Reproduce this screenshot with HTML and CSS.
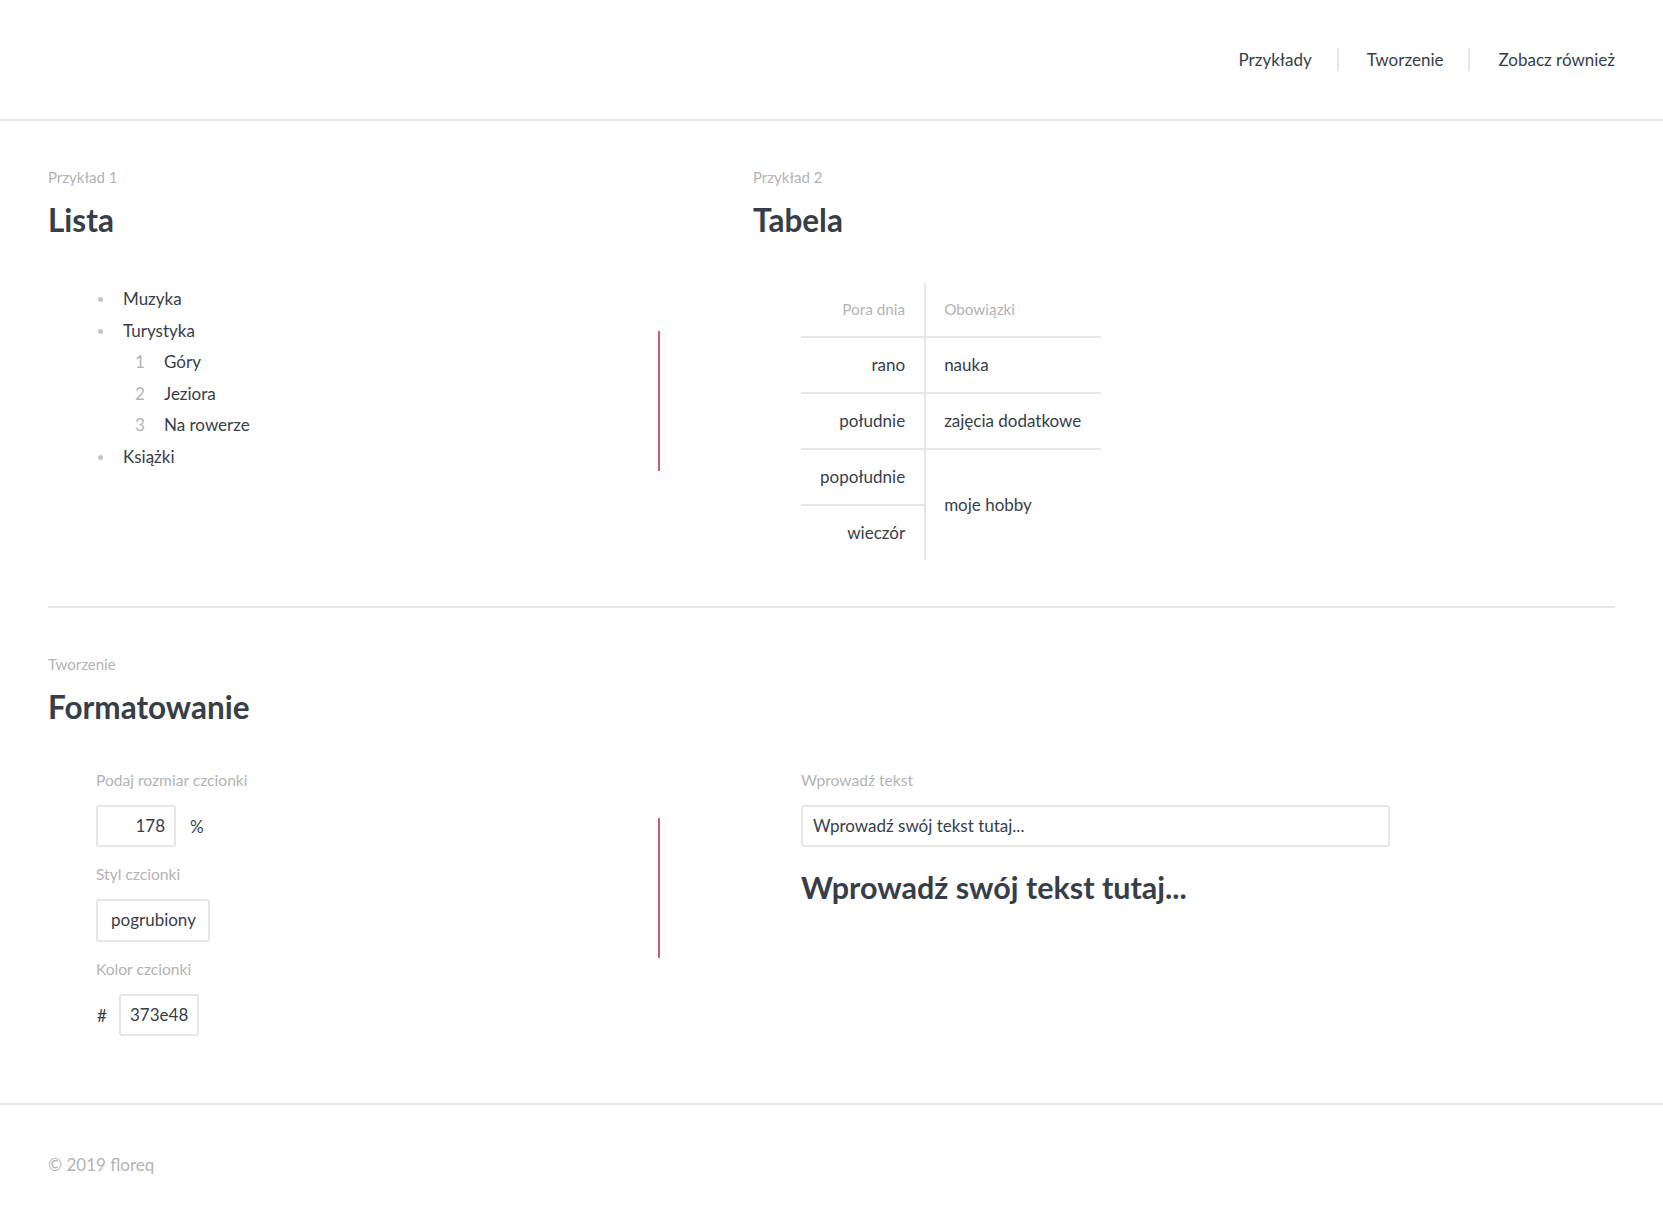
FILE: index.html
```html
<!DOCTYPE html>
<html lang="pl">
<head>
<meta charset="utf-8">
<title>Przykłady</title>
<link rel="stylesheet" href="styles.css">
</head>
<body>
<header class="topbar">
  <nav class="nav">
    <a class="nav-item" href="#przyklady">Przykłady</a>
    <a class="nav-item" href="#tworzenie">Tworzenie</a>
    <a class="nav-item" href="#zobacz">Zobacz również</a>
  </nav>
</header>

<main class="main">
  <section class="section section-first" id="przyklady">
    <div class="grid">
      <div class="col">
        <div class="eyebrow">Przykład 1</div>
        <h2 class="title">Lista</h2>
        <ul class="list">
          <li>Muzyka</li>
          <li>Turystyka
            <ol class="sublist">
              <li>Góry</li>
              <li>Jeziora</li>
              <li>Na rowerze</li>
            </ol>
          </li>
          <li>Książki</li>
        </ul>
      </div>
      <div class="divider"></div>
      <div class="col col-right">
        <div class="eyebrow">Przykład 2</div>
        <h2 class="title">Tabela</h2>
        <table class="table">
          <thead>
            <tr>
              <th class="c1">Pora dnia</th>
              <th class="c2">Obowiązki</th>
            </tr>
          </thead>
          <tbody>
            <tr>
              <td class="c1">rano</td>
              <td class="c2">nauka</td>
            </tr>
            <tr>
              <td class="c1">południe</td>
              <td class="c2">zajęcia dodatkowe</td>
            </tr>
            <tr>
              <td class="c1">popołudnie</td>
              <td class="c2 span" rowspan="2">moje hobby</td>
            </tr>
            <tr class="last">
              <td class="c1">wieczór</td>
            </tr>
          </tbody>
        </table>
      </div>
    </div>
  </section>

  <section class="section section-second" id="tworzenie">
    <div class="grid">
      <div class="col">
        <div class="eyebrow">Tworzenie</div>
        <h2 class="title">Formatowanie</h2>
        <div class="form">
          <div class="field-label">Podaj rozmiar czcionki</div>
          <div class="field-row">
            <span class="box box-size">178</span>
            <span class="unit">%</span>
          </div>
          <div class="field-label">Styl czcionki</div>
          <div class="field-row">
            <span class="box box-style">pogrubiony</span>
          </div>
          <div class="field-label">Kolor czcionki</div>
          <div class="field-row">
            <span class="hash">#</span>
            <span class="box box-color">373e48</span>
          </div>
        </div>
      </div>
      <div class="divider"></div>
      <div class="col col-right">
        <div class="form form-right">
          <div class="field-label">Wprowadź tekst</div>
          <div class="field-row">
            <span class="box box-text">Wprowadź swój tekst tutaj...</span>
          </div>
          <div class="preview">Wprowadź swój tekst tutaj...</div>
        </div>
      </div>
    </div>
  </section>
</main>

<footer class="footer">© 2019 floreq</footer>
</body>
</html>
```

FILE: styles.css
```css
* {
  box-sizing: border-box;
}

html, body {
  margin: 0;
  padding: 0;
  background: #ffffff;
}

body {
  font-family: Lato, "Noto Sans", sans-serif;
  font-size: 17px;
  color: #373e48;
}

/* Header */
.topbar {
  height: 121px;
  border-bottom: 2px solid #e6e6e6;
  padding: 0 48px;
  display: flex;
  justify-content: flex-end;
  align-items: center;
}

.nav {
  display: flex;
  align-items: center;
}

.nav-item {
  display: block;
  color: #373e48;
  text-decoration: none;
  line-height: 23px;
  padding: 0 25px 0 28px;
}

.nav-item:first-child {
  padding-left: 0;
}

.nav-item:last-child {
  padding-right: 0;
}

.nav-item + .nav-item {
  border-left: 2px solid #e6e6e6;
}

/* Main */
.main {
  padding: 0 48px;
}

.section {
  padding: 46px 0 46px;
}

.section-first {
  border-bottom: 2px solid #e6e6e6;
}

.section-second {
  padding-bottom: 67px;
}

.grid {
  display: grid;
  grid-template-columns: 610px 2px 1fr;
  align-items: start;
}

.col-right {
  padding-left: 93px;
}

.divider {
  width: 2px;
  height: 140px;
  margin-top: 164px;
  background: #d05a70;
}

.eyebrow {
  font-size: 15px;
  line-height: 20px;
  color: #b3b3b3;
}

.title {
  margin: 13px 0 43px;
  font-size: 31.5px;
  line-height: 40px;
  font-weight: 700;
  color: #373e48;
}

/* List */
.list,
.sublist {
  list-style: none;
  margin: 0;
  padding: 0;
}

.list {
  margin-left: 48px;
}

.list > li {
  line-height: 31.5px;
  padding-left: 27px;
}

.list > li::before {
  content: "";
  display: inline-block;
  width: 5px;
  height: 5px;
  border-radius: 50%;
  background: #c4c4c4;
  margin-left: -25px;
  margin-right: 20px;
  vertical-align: middle;
  position: relative;
  top: -1px;
}

.sublist {
  margin-left: 12px;
  counter-reset: item;
}

.sublist > li {
  counter-increment: item;
  line-height: 31.5px;
  padding-left: 29px;
}

.sublist > li::before {
  content: counter(item);
  display: inline-block;
  width: 29px;
  margin-left: -29px;
  color: #b3b3b3;
}

/* Table */
.table {
  margin-left: 48px;
  border-collapse: separate;
  border-spacing: 0;
}

.table th,
.table td {
  padding: 15px 20px 15px 18px;
  line-height: 24px;
  border-bottom: 2px solid #e6e6e6;
  font-weight: 400;
  white-space: nowrap;
}

.table th {
  font-size: 15.3px;
  color: #b3b3b3;
  padding-top: 14px;
  padding-bottom: 15px;
}

.table .c1 {
  text-align: right;
  border-right: 2px solid #e6e6e6;
  padding-left: 19px;
  padding-right: 19px;
}

.table .c2 {
  text-align: left;
}

.table td.span {
  border-bottom: none;
  vertical-align: middle;
}

.table tr.last td {
  border-bottom: none;
}

/* Form */
.form {
  margin-left: 48px;
}

.form-right {
  margin-top: 116px;
}

.field-label {
  font-size: 15.6px;
  line-height: 20px;
  color: #b3b3b3;
  margin-bottom: 15px;
}

.field-row {
  display: flex;
  align-items: center;
  margin-bottom: 17px;
}

.field-row:last-child {
  margin-bottom: 0;
}

.box {
  display: block;
  height: 42px;
  line-height: 38px;
  border: 2px solid #e6e6e6;
  border-radius: 3px;
  padding: 0 12px;
  color: #373e48;
  background: #ffffff;
}

.box-size {
  width: 80px;
  text-align: right;
  padding-right: 9px;
}

.unit {
  margin-left: 14px;
}

.box-style {
  height: 43px;
  padding: 0 12px 0 13px;
}

.hash {
  width: 23px;
  padding-left: 1px;
}

.box-color {
  padding: 0 9px;
}

.box-text {
  width: 589px;
  padding: 0 10px;
}

.preview {
  margin-top: 20px;
  font-size: 30.5px;
  line-height: 40px;
  font-weight: 700;
  color: #373e48;
}

/* Footer */
.footer {
  border-top: 2px solid #e6e6e6;
  padding: 48px 48px 46px;
  line-height: 24px;
  color: #b3b3b3;
}
```
